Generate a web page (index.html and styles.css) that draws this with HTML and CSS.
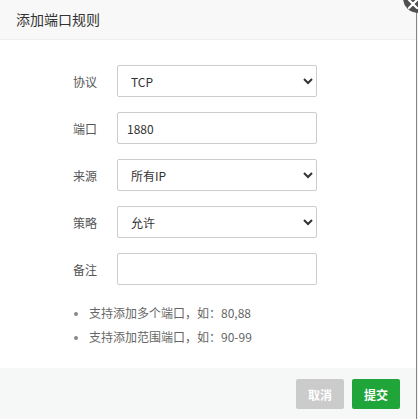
FILE: index.html
```html
<!DOCTYPE html>
<html lang="zh-CN">
<head>
<meta charset="utf-8">
<title>添加端口规则</title>
<link rel="stylesheet" href="styles.css">
</head>
<body>
<div class="dialog">
  <div class="header">添加端口规则</div>
  <a class="close" href="#" aria-label="关闭">
    <svg width="12" height="12" viewBox="0 0 12 12"><path d="M2 2 L10 10 M10 2 L2 10" stroke="#fff" stroke-width="2.2" stroke-linecap="round"/></svg>
  </a>
  <div class="body">
    <div class="row">
      <span class="label">协议</span>
      <select class="control"><option>TCP</option></select>
    </div>
    <div class="row">
      <span class="label">端口</span>
      <input class="control input" type="text" value="1880">
    </div>
    <div class="row">
      <span class="label">来源</span>
      <select class="control"><option>所有IP</option></select>
    </div>
    <div class="row">
      <span class="label">策略</span>
      <select class="control"><option>允许</option></select>
    </div>
    <div class="row">
      <span class="label">备注</span>
      <input class="control input" type="text" value="">
    </div>
    <ul class="tips">
      <li>支持添加多个端口，如：80,88</li>
      <li>支持添加范围端口，如：90-99</li>
    </ul>
  </div>
  <div class="footer">
    <button class="btn btn-cancel">取消</button>
    <button class="btn btn-submit">提交</button>
  </div>
</div>
</body>
</html>
```
FILE: styles.css
```css
html, body {
  margin: 0;
  padding: 0;
  background: #f2f2f2;
}
body {
  width: 418px;
  height: 419px;
  overflow: hidden;
  font-family: "Noto Sans CJK SC", "Noto Sans", sans-serif;
}
.dialog {
  position: relative;
  width: 416px;
  height: 419px;
  border-right: 1px solid #858585;
  background: #fff;
  display: flex;
  flex-direction: column;
}
.header {
  height: 39px;
  line-height: 39px;
  border-bottom: 1px solid #eee;
  background: #f8f8f8;
  padding-left: 16px;
  font-size: 14px;
  color: #333;
}
.close {
  position: absolute;
  left: 403px;
  top: -17px;
  width: 30px;
  height: 30px;
  border-radius: 50%;
  background: #4f4f4f;
  display: flex;
  align-items: center;
  justify-content: center;
}
.close svg {
  margin: 12px 10px 0 0;
}
.body {
  flex: 1;
  padding-top: 25px;
  display: flex;
  flex-direction: column;
  gap: 15px;
}
.row {
  display: flex;
  align-items: center;
  height: 32px;
}
.label {
  width: 81px;
  margin-left: 16px;
  margin-right: 20px;
  text-align: right;
  font-size: 12px;
  color: #555;
}
.control {
  box-sizing: border-box;
  width: 200px;
  height: 32px;
  border: 1px solid #ccc;
  border-radius: 2px;
  background: #fff;
  font-family: "Noto Sans CJK SC", "Noto Sans", sans-serif;
  font-size: 12px;
  color: #333;
  margin: 0;
  padding: 0 6px 0 9px;
  outline: none;
}
.input {
  padding: 0 9px;
}
.tips {
  margin: 1px 0 0 0;
  padding: 0 0 0 89px;
  font-size: 12px;
  line-height: 24px;
  color: #666;
}
.tips li::marker {
  color: #888;
  font-size: 10px;
}
.footer {
  height: 51px;
  background: #f6f8f8;
  display: flex;
  justify-content: flex-end;
  align-items: flex-start;
  gap: 8px;
  padding: 11px 16px 0 0;
  box-sizing: border-box;
}
.btn {
  width: 48px;
  height: 30px;
  border: 0;
  border-radius: 2px;
  color: #fff;
  font-family: "Noto Sans CJK SC", "Noto Sans", sans-serif;
  font-size: 12px;
  font-weight: bold;
  padding: 0;
}
.btn-cancel {
  background: #cbcbcb;
}
.btn-submit {
  background: #20a53a;
}
```
